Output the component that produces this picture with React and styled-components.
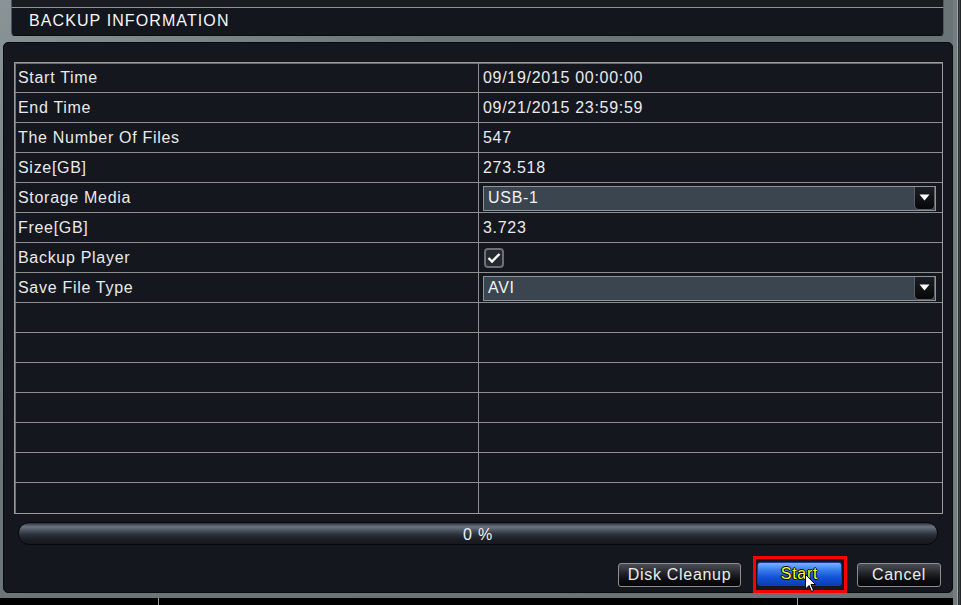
import React from "react";
import styled, { createGlobalStyle } from "styled-components";

const Global = createGlobalStyle`
  html, body { margin: 0; padding: 0; background: #000; overflow: hidden; }
  * { box-sizing: border-box; }
`;

const Screen = styled.div`
  width: 961px;
  height: 605px;
  display: flex;
  background: linear-gradient(135deg, #8a9496 0%, #6c7678 30%, #687274 100%);
  font-family: "Liberation Sans", Arial, sans-serif;
  color: #e8e8e8;
  overflow: hidden;
`;

const MainColumn = styled.div`
  width: 953px;
  display: flex;
  flex-direction: column;
`;

const RightEdge = styled.div`
  flex: 1;
  display: flex;
`;

const EdgeGray = styled.div`
  width: 4px;
  background: #737d7f;
`;

const EdgeDark = styled.div`
  flex: 1;
  background: linear-gradient(90deg, #23272b 0%, #3c4245 50%, #15181b 100%);
  border-left: 1px solid #9aa3a5;
`;

const TitleWrap = styled.div`
  margin-left: 11px;
  width: 933px;
  display: flex;
  flex-direction: column;
`;

const TitleTop = styled.div`
  height: 7px;
  background: #191c21;
  border-left: 1px solid #50575b;
  border-right: 1px solid #50575b;
`;

const TitleBar = styled.div`
  height: 29px;
  background: #14161d;
  border-top: 1px solid #8d9799;
  border-left: 1px solid #50575b;
  border-right: 1px solid #50575b;
  border-bottom: 1px solid #0b0c0f;
  border-radius: 0 0 4px 4px;
  display: flex;
  align-items: center;
  padding-left: 17px;
  padding-bottom: 1px;
  font-size: 16px;
  letter-spacing: 1.1px;
  color: #f6f6f6;
`;

const Panel = styled.div`
  margin-top: 6px;
  margin-left: 3px;
  width: 950px;
  height: 551px;
  background: #15171e;
  border: 1px solid #0a0b0e;
  border-radius: 5px;
  padding: 19px 0 0 10px;
  display: flex;
  flex-direction: column;
`;

const Table = styled.div`
  width: 929px;
  display: grid;
  grid-template-columns: 464px 463px;
  border: 1px solid #9a9a9a;
  box-shadow: inset 1px 1px 0 #6c6c6c;
`;

const Cell = styled.div`
  height: 30px;
  border-bottom: ${(p) => (p.$last ? "none" : "1px solid #8e8e8e")};
  border-right: ${(p) => (p.$left ? "1px solid #8e8e8e" : "none")};
  display: flex;
  align-items: center;
  padding-left: ${(p) => (p.$left ? "3px" : "4px")};
  padding-right: 6px;
  font-size: 16px;
  letter-spacing: 0.7px;
  color: #eaeaea;
  white-space: nowrap;
`;

const Select = styled.div`
  flex: 1;
  height: 25px;
  margin-top: 1px;
  display: flex;
  align-items: stretch;
  background: #3a4550;
  border: 1px solid #8c9399;
`;

const SelectText = styled.div`
  flex: 1;
  display: flex;
  align-items: center;
  padding-left: 4px;
  font-size: 16px;
  letter-spacing: 0.7px;
  color: #f2f2f2;
`;

const SelectArrow = styled.div`
  width: 21px;
  background: linear-gradient(#1c1f23, #060708);
  border: 1px solid #5a6066;
  border-top: none;
  border-radius: 0 0 5px 5px;
  display: flex;
  align-items: center;
  justify-content: center;
`;

const Check = styled.div`
  width: 20px;
  height: 20px;
  margin-left: 1px;
  border: 2px solid #6c7074;
  border-radius: 4px;
  background: #262a2e;
  display: flex;
  align-items: center;
  justify-content: center;
`;

const Progress = styled.div`
  margin-top: 8px;
  margin-left: 4px;
  width: 920px;
  height: 23px;
  border: 1px solid #07080a;
  border-radius: 11px;
  background: linear-gradient(
    to bottom,
    #2c323b 0%,
    #6a7483 18%,
    #515a67 32%,
    #2f353e 52%,
    #1c2027 75%,
    #15181d 100%
  );
  display: flex;
  align-items: center;
  justify-content: center;
  font-size: 16px;
  letter-spacing: 0.8px;
  color: #f0f0f0;
  padding-top: 3px;
`;

const ButtonRow = styled.div`
  margin-top: 11px;
  width: 927px;
  display: flex;
  align-items: center;
  justify-content: flex-end;
  gap: 10px;
`;

const Button = styled.div`
  width: ${(p) => p.$w}px;
  height: 24px;
  border-radius: 3px;
  border: 1px solid ${(p) => (p.$primary ? "#1a3f96" : "#8a8d91")};
  background: ${(p) =>
    p.$primary
      ? "linear-gradient(#7ab2ff 0%, #3a80f0 30%, #1452d6 65%, #0b3fb8 100%)"
      : "linear-gradient(#4c5056 0%, #24262a 40%, #0d0e10 70%, #050506 100%)"};
  display: flex;
  align-items: center;
  justify-content: center;
  font-size: 16px;
  letter-spacing: 0.7px;
  color: ${(p) => (p.$primary ? "#ffff1a" : "#ececec")};
  text-shadow: ${(p) =>
    p.$primary
      ? "1px 0 0 #000, -1px 0 0 #000, 0 1px 0 #000, 0 -1px 0 #000"
      : "none"};
  margin-right: ${(p) => p.$mr || 0}px;
`;

const Highlight = styled.div`
  position: relative;
  border: 3px solid #ff0000;
  padding: 3px 2px 4px 1px;
`;

const Cursor = styled.svg`
  position: absolute;
  left: 49px;
  top: 15px;
`;

const BottomGray = styled.div`
  height: 5px;
`;

const Footer = styled.div`
  flex: 1;
  background: #000;
  display: flex;
`;

const FooterLine = styled.div`
  width: 1px;
  background: #9a9a9a;
  margin-left: ${(p) => p.$ml}px;
`;

const ArrowIcon = () => (
  <svg width="11" height="7" viewBox="0 0 11 7">
    <polygon points="0.5,0.5 10.5,0.5 5.5,6.5" fill="#ffffff" />
  </svg>
);

const CheckIcon = () => (
  <svg width="14" height="12" viewBox="0 0 14 12">
    <polyline
      points="1.5,6 5,9.5 12.5,2"
      fill="none"
      stroke="#ffffff"
      strokeWidth="2.4"
    />
  </svg>
);

const rows = [
  ["Start Time", { text: "09/19/2015 00:00:00" }],
  ["End Time", { text: "09/21/2015 23:59:59" }],
  ["The Number Of Files", { text: "547" }],
  ["Size[GB]", { text: "273.518" }],
  ["Storage Media", { select: "USB-1" }],
  ["Free[GB]", { text: "3.723" }],
  ["Backup Player", { check: true }],
  ["Save File Type", { select: "AVI" }],
  ["", {}],
  ["", {}],
  ["", {}],
  ["", {}],
  ["", {}],
  ["", {}],
  ["", {}],
];

export default function App() {
  return (
    <>
      <Global />
      <Screen>
        <MainColumn>
          <TitleWrap>
            <TitleTop />
            <TitleBar>BACKUP INFORMATION</TitleBar>
          </TitleWrap>
          <Panel>
            <Table>
              {rows.map(([label, v], i) => {
                const last = i === rows.length - 1;
                return (
                  <React.Fragment key={i}>
                    <Cell $left $last={last}>
                      {label}
                    </Cell>
                    <Cell $last={last}>
                      {v.text}
                      {v.select && (
                        <Select>
                          <SelectText>{v.select}</SelectText>
                          <SelectArrow>
                            <ArrowIcon />
                          </SelectArrow>
                        </Select>
                      )}
                      {v.check && (
                        <Check>
                          <CheckIcon />
                        </Check>
                      )}
                    </Cell>
                  </React.Fragment>
                );
              })}
            </Table>
            <Progress>0 %</Progress>
            <ButtonRow>
              <Button $w={123} $mr={2}>
                Disk Cleanup
              </Button>
              <Highlight>
                <Button $w={85} $primary>
                  Start
                </Button>
                <Cursor width="12" height="19" viewBox="0 0 12 19">
                  <polygon
                    points="0.5,0.5 0.5,15 4,11.5 6.5,17.5 8.5,16.5 6,10.5 10.5,10.5"
                    fill="#ffffff"
                    stroke="#000000"
                    strokeWidth="1"
                    strokeLinejoin="miter"
                  />
                </Cursor>
              </Highlight>
              <Button $w={84}>Cancel</Button>
            </ButtonRow>
          </Panel>
          <BottomGray />
          <Footer>
            <FooterLine $ml={158} />
            <FooterLine $ml={638} />
          </Footer>
        </MainColumn>
        <RightEdge>
          <EdgeGray />
          <EdgeDark />
        </RightEdge>
      </Screen>
    </>
  );
}
